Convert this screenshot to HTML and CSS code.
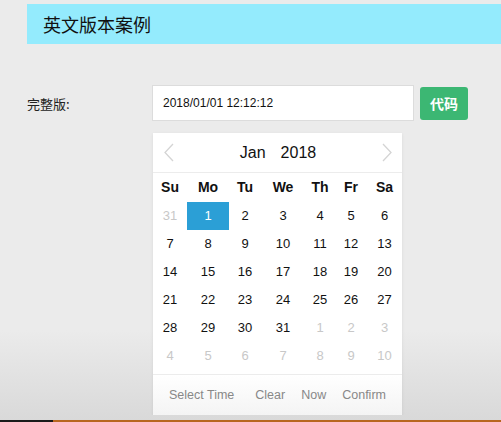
FILE: index.html
```html
<!DOCTYPE html>
<html lang="zh">
<head>
<meta charset="utf-8">
<title>英文版本案例</title>
<link rel="stylesheet" href="styles.css">
</head>
<body>
<div class="banner">英文版本案例</div>
<div class="form-row">
  <label class="label">完整版:</label>
  <div class="input">2018/01/01 12:12:12</div>
  <button class="btn">代码</button>
</div>
<div class="calendar">
  <div class="cal-head">
    <svg class="arrow" width="10" height="19" viewBox="0 0 10 19"><polyline points="9,1 1,9.5 9,18" fill="none" stroke="#d4d4d4" stroke-width="1.3"/></svg>
    <div class="title"><span>Jan</span><span>2018</span></div>
    <svg class="arrow" width="10" height="19" viewBox="0 0 10 19"><polyline points="1,1 9,9.5 1,18" fill="none" stroke="#d4d4d4" stroke-width="1.3"/></svg>
  </div>
  <div class="grid week">
    <span>Su</span><span>Mo</span><span>Tu</span><span>We</span><span>Th</span><span>Fr</span><span>Sa</span>
  </div>
  <div class="grid days">
    <span class="other">31</span><span class="sel">1</span><span>2</span><span>3</span><span>4</span><span>5</span><span>6</span>
    <span>7</span><span>8</span><span>9</span><span>10</span><span>11</span><span>12</span><span>13</span>
    <span>14</span><span>15</span><span>16</span><span>17</span><span>18</span><span>19</span><span>20</span>
    <span>21</span><span>22</span><span>23</span><span>24</span><span>25</span><span>26</span><span>27</span>
    <span>28</span><span>29</span><span>30</span><span>31</span><span class="other">1</span><span class="other">2</span><span class="other">3</span>
    <span class="other">4</span><span class="other">5</span><span class="other">6</span><span class="other">7</span><span class="other">8</span><span class="other">9</span><span class="other">10</span>
  </div>
  <div class="cal-foot">
    <span class="first">Select Time</span><span>Clear</span><span>Now</span><span>Confirm</span>
  </div>
</div>
</body>
</html>
```

FILE: styles.css
```css
html {
  height: 100%;
  background:
    linear-gradient(to right, #1a1a1a 53px, #b8661f 53px) left bottom / 100% 2px no-repeat,
    linear-gradient(to bottom, #ebebeb 0, #ebebeb 330px, #d9d9d9 420px) left top / 100% 100% no-repeat,
    #ebebeb;
}
body {
  margin: 0;
  font-family: "Liberation Sans", "Noto Sans CJK SC", sans-serif;
  color: #111;
}
.banner {
  margin: 4px 0 0 27px;
  height: 40px;
  line-height: 40px;
  padding-left: 16px;
  background: #94ebfd;
  font-size: 18px;
  font-family: "Noto Sans CJK SC", sans-serif;
  color: #111;
}
.form-row {
  display: flex;
  align-items: center;
  margin: 41px 0 0 27px;
}
.label {
  width: 125px;
  font-size: 13px;
  font-family: "Noto Sans CJK SC", sans-serif;
  color: #222;
}
.input {
  box-sizing: border-box;
  width: 262px;
  height: 36px;
  line-height: 34px;
  border: 1px solid #dcdcdc;
  background: #fff;
  padding-left: 10px;
  font-size: 12px;
  color: #111;
}
.btn {
  margin-left: 6px;
  width: 48px;
  height: 33px;
  border: 0;
  border-radius: 3px;
  background: #3cb773;
  color: #fff;
  font-size: 14px;
  font-weight: bold;
  font-family: "Noto Sans CJK SC", sans-serif;
  padding: 0;
}
.calendar {
  margin: 12px 0 0 153px;
  width: 249px;
  background: #fff;
  box-shadow: 0 1px 3px rgba(0,0,0,0.08);
}
.cal-head {
  height: 39px;
  border-bottom: 1px solid #ececec;
  display: flex;
  align-items: center;
  justify-content: space-between;
  padding: 0 10px 0 11px;
}
.arrow { display: block; }
.title {
  display: flex;
  gap: 15px;
  font-size: 16px;
  color: #111;
}
.grid {
  display: grid;
  grid-template-columns: 34px 42px 32px 44px 30px 32px 35px;
  text-align: center;
}
.week span {
  height: 29px;
  line-height: 29px;
  font-size: 14px;
  font-weight: bold;
  color: #111;
}
.days {
  padding-bottom: 4px;
}
.days span {
  height: 28px;
  line-height: 28px;
  font-size: 13px;
  color: #111;
}
.days span.other { color: #c8c8c8; }
.days span.sel {
  background: #2b9fd6;
  color: #fff;
}
.cal-foot {
  height: 40px;
  border-top: 1px solid #ececec;
  background: linear-gradient(to bottom, #fff, #f4f4f4);
  display: flex;
  align-items: center;
  gap: 16px;
  padding-left: 16px;
  font-size: 12.5px;
  color: #888;
}
.cal-foot .first { margin-right: 5px; }
```
